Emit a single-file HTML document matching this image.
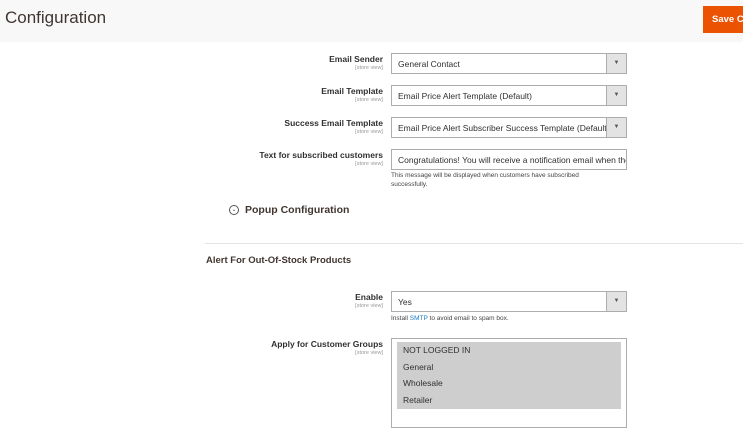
<!DOCTYPE html>
<html><head><style>
*{margin:0;padding:0;box-sizing:border-box}
body{width:743px;height:420px;overflow:hidden;background:#fff;font-family:"Liberation Sans",sans-serif;color:#303030;position:relative}
.hdr{position:absolute;left:0;top:0;width:743px;height:42px;background:#f8f8f8}
.title{position:absolute;left:5px;top:8px;font-size:17px;color:#41362f}
.save{position:absolute;left:703px;top:6px;width:45px;height:27px;background:#eb5202;color:#fff;font-weight:bold;font-size:9.5px;padding:8px 0 0 9px;white-space:nowrap}
.lbl{position:absolute;right:360px;text-align:right;font-size:8.5px;font-weight:bold;color:#303030;white-space:nowrap}
.lbl small{display:block;font-weight:normal;font-size:5.5px;color:#999;margin-top:1px}
.sel{position:absolute;left:391px;width:236px;height:21px;border:1px solid #adadad;background:#fff;font-size:8.5px;padding:5px 0 0 6px;white-space:nowrap;overflow:hidden}
.sel .b{position:absolute;right:0;top:0;width:20px;height:19px;background:#e3e3e3;border-left:1px solid #adadad;font-size:6px;text-align:center;padding-top:6px;color:#555}
.note{position:absolute;left:391px;font-size:6.5px;color:#444;line-height:9px}
</style></head><body>
<div class="hdr"></div>
<div class="title">Configuration</div>
<div class="save">Save C</div>

<div class="lbl" style="top:54px">Email Sender<small>[store view]</small></div>
<div class="sel" style="top:53px">General Contact<div class="b">▼</div></div>
<div class="lbl" style="top:86px">Email Template<small>[store view]</small></div>
<div class="sel" style="top:85px">Email Price Alert Template (Default)<div class="b">▼</div></div>
<div class="lbl" style="top:118px">Success Email Template<small>[store view]</small></div>
<div class="sel" style="top:117px">Email Price Alert Subscriber Success Template (Default)<div class="b" style="border-left:1px solid #adadad">▼</div></div>
<div class="lbl" style="top:150px">Text for subscribed customers<small>[store view]</small></div>
<div class="sel" style="top:149px">Congratulations! You will receive a notification email when the price drops</div>
<div class="note" style="top:171px">This message will be displayed when customers have subscribed<br>successfully.</div>

<div style="position:absolute;left:229px;top:205px;width:10px;height:10px;border:1px solid #555;border-radius:50%;font-size:6px;text-align:center;line-height:8px;color:#555">⌄</div>
<div style="position:absolute;left:245px;top:204px;font-size:10.5px;font-weight:bold;color:#41362f">Popup Configuration</div>
<div style="position:absolute;left:205px;top:243px;width:538px;height:1px;background:#e3e3e3"></div>
<div style="position:absolute;left:206px;top:255px;font-size:9.5px;font-weight:bold;color:#41362f">Alert For Out-Of-Stock Products</div>

<div class="lbl" style="top:292px">Enable<small>[store view]</small></div>
<div class="sel" style="top:291px">Yes<div class="b">▼</div></div>
<div class="note" style="top:314px">Install <span style="color:#1979c3">SMTP</span> to avoid email to spam box.</div>
<div class="lbl" style="top:339px">Apply for Customer Groups<small>[store view]</small></div>
<div style="position:absolute;left:391px;top:338px;width:236px;height:90px;border:1px solid #adadad"></div>
<div style="position:absolute;left:397px;top:342px;width:224px;height:67px;background:#cecece;font-size:8.5px;line-height:16.7px;padding:0 0 0 6px">NOT LOGGED IN<br>General<br>Wholesale<br>Retailer</div>
</body></html>
